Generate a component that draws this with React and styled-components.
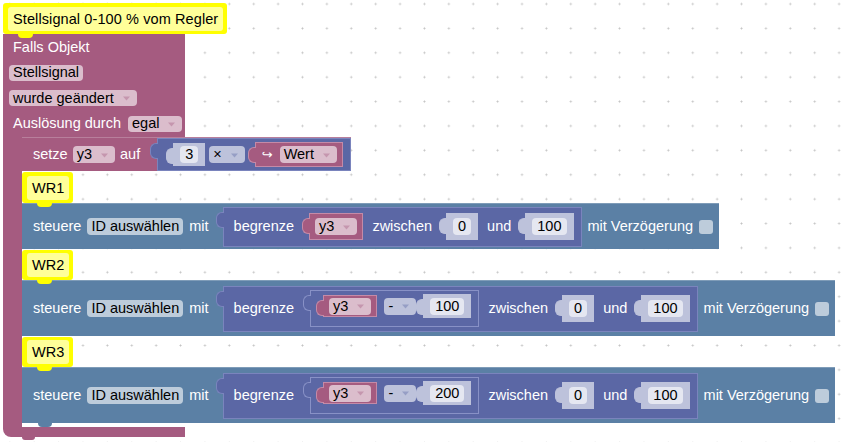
import React from "react";
import styled, { createGlobalStyle } from "styled-components";

const PURPLE = "#a55b80";
const STEEL = "#5b80a5";
const INDIGO = "#5b67a5";
const PINK_FIELD = "#dbbdcc";
const STEEL_FIELD = "#bdccdb";
const INDIGO_FIELD = "#bdc2db";
const SHADOW = "#bdc2db";
const SHADOW_FIELD = "#e5e7f1";
const PINK_ARROW = "#c596ae";
const INDIGO_ARROW = "#969ec5";

const GlobalStyle = createGlobalStyle`
  html, body { margin: 0; padding: 0; background: #fff; }
  body { font-family: "Liberation Sans", Arial, sans-serif; }
`;

const Canvas = styled.div`
  width: 841px;
  height: 442px;
  overflow: hidden;
  box-sizing: border-box;
  padding: 2px 0 0 3px;
  background-color: #fff;
  background-image: radial-gradient(circle, #c2c2c2 0.7px, transparent 1.3px);
  background-size: 24.4px 24.4px;
  background-position: -2.4px -8.2px;
  font-family: "Liberation Sans", Arial, sans-serif;
  font-size: 14.5px;
`;

const Program = styled.div`
  display: flex;
  flex-direction: column;
  align-items: flex-start;
`;

const Comment = styled.div`
  position: relative;
  display: flex;
  align-items: center;
  box-sizing: border-box;
  height: ${({ $h }) => $h}px;
  margin-top: 1px;
  padding: 0 4px 0 5px;
  background: #ffff00;
  border-radius: 3px;

  &::after {
    content: "";
    position: absolute;
    left: 15px;
    bottom: -4px;
    width: 15px;
    height: 4px;
    background: #ffff00;
    border-radius: 0 0 6px 6px;
    z-index: 3;
  }
`;

const CommentText = styled.span`
  display: block;
  height: 24px;
  line-height: 24px;
  padding: 0 5px;
  background: #ffff99;
  border-radius: 3px;
  color: #000;
  white-space: nowrap;
  letter-spacing: ${({ $ls }) => $ls || 0}px;
`;

const EventBlock = styled.div`
  display: flex;
  flex-direction: column;
  align-items: flex-start;
`;

const EventHead = styled.div`
  display: flex;
  flex-direction: column;
  box-sizing: border-box;
  width: 182px;
  padding: 0 0 1px 6px;
  background: ${PURPLE};
`;

const HeadRow = styled.div`
  display: flex;
  align-items: center;
  gap: 7px;
  height: ${({ $h }) => $h}px;
  padding-left: ${({ $inset }) => $inset || 0}px;
`;

const EventBody = styled.div`
  display: flex;
  align-items: stretch;
`;

const Spine = styled.div`
  flex: none;
  width: 19px;
  background: ${PURPLE};
`;

const Statements = styled.div`
  display: flex;
  flex-direction: column;
  align-items: flex-start;
  padding-bottom: 4px;
`;

const Foot = styled.div`
  position: relative;
  width: 182px;
  height: 10px;
  background: ${PURPLE};
  border-radius: 0 0 0 8px;

  &::after {
    content: "";
    position: absolute;
    left: 19px;
    bottom: -3px;
    width: 13px;
    height: 3px;
    background: ${PURPLE};
    border-radius: 0 0 5px 5px;
  }
`;

const Statement = styled.div`
  position: relative;
  display: flex;
  align-items: center;
  box-sizing: border-box;
  height: ${({ $h }) => $h}px;
  padding: ${({ $pad }) => $pad};
  gap: ${({ $gap }) => $gap}px;
  background: ${({ $color }) => $color};
  border-top: 1px solid rgba(255, 255, 255, 0.22);

  &::after {
    content: "";
    display: ${({ $tail }) => ($tail ? "block" : "none")};
    position: absolute;
    left: 16px;
    bottom: -4px;
    width: 14px;
    height: 4px;
    background: ${({ $color }) => $color};
    border-radius: 0 0 5px 5px;
  }
`;

const ValueBlock = styled.div`
  position: relative;
  flex: none;
  display: flex;
  align-items: center;
  box-sizing: border-box;
  height: ${({ $h }) => ($h ? `${$h}px` : "auto")};
  align-self: ${({ $h }) => ($h ? "auto" : "stretch")};
  margin-left: ${({ $ml }) => $ml || 0}px;
  padding: ${({ $pad }) => $pad};
  gap: ${({ $gap }) => $gap || 0}px;
  background: ${({ $color }) => $color};
  border: 1px solid ${({ $edge }) => $edge};

  &::before {
    content: "";
    position: absolute;
    left: -8px;
    top: 4px;
    width: 7px;
    height: 14px;
    background: ${({ $color }) => $color};
    border: 1px solid ${({ $edge }) => $edge};
    border-right: none;
    border-radius: 6px 0 0 6px;
  }
`;

const Text = styled.span`
  color: #fff;
  white-space: nowrap;
  line-height: 17px;
`;

const Hook = styled.span`
  color: #fff;
  font-family: "DejaVu Sans", sans-serif;
  font-size: 13px;
  line-height: 17px;
`;

const Field = styled.span`
  display: inline-flex;
  align-items: center;
  flex: none;
  height: ${({ $fh }) => $fh || 17}px;
  padding: 0 ${({ $px }) => $px || 4}px;
  background: ${({ $bg }) => $bg};
  border-radius: 4px;
  color: #000;
  white-space: nowrap;
  line-height: 17px;
`;

const ArrowSvg = styled.svg`
  margin: 1px 3px 0 9px;
  flex: none;
`;

const Checkbox = styled.span`
  flex: none;
  width: 14px;
  height: 14px;
  border-radius: 3px;
  background: ${STEEL_FIELD};
`;

function Arrow({ color }) {
  return (
    <ArrowSvg width="7" height="5" viewBox="0 0 7 5">
      <path d="M0 0.5h7L3.5 4.5z" fill={color} />
    </ArrowSvg>
  );
}

function Dropdown({ children, bg, arrow, fh }) {
  return (
    <Field $bg={bg} $fh={fh}>
      {children}
      <Arrow color={arrow} />
    </Field>
  );
}

function VarBlock({ name, h, ml }) {
  return (
    <ValueBlock $color={PURPLE} $edge="#c48aa7" $h={h} $ml={ml} $pad="0 5px">
      <Dropdown bg={PINK_FIELD} arrow={PINK_ARROW}>
        {name}
      </Dropdown>
    </ValueBlock>
  );
}

function NumBlock({ value, h, ml }) {
  return (
    <ValueBlock $color={SHADOW} $edge={SHADOW} $h={h} $ml={ml} $pad="0 6px">
      <Field $bg={SHADOW_FIELD} $px={5}>
        {value}
      </Field>
    </ValueBlock>
  );
}

function Minus({ value }) {
  return (
    <ValueBlock
      $color={INDIGO}
      $edge="#8891c6"
      $h={37}
      $ml={7}
      $pad="4px 7px 9px 5px"
      $gap={7}
    >
      <VarBlock name="y3" h={22} ml={7} />
      <Dropdown bg={INDIGO_FIELD} arrow={INDIGO_ARROW}>
        -
      </Dropdown>
      <NumBlock value={value} h={24} />
    </ValueBlock>
  );
}

function Clamp({ h, children }) {
  return (
    <ValueBlock
      $color={INDIGO}
      $edge="#7a84bd"
      $h={h}
      $ml={8}
      $pad="0 7px 0 10px"
      $gap={9}
    >
      <Text>begrenze</Text>
      {children}
      <Text>zwischen</Text>
      <NumBlock value="0" h={27} ml={5} />
      <Text>und</Text>
      <NumBlock value="100" h={27} ml={5} />
    </ValueBlock>
  );
}

function Steuere({ h, tail, children }) {
  return (
    <Statement $color={STEEL} $h={h} $pad="0 6px 0 11px" $gap={6} $tail={tail}>
      <Text>steuere</Text>
      <Field $bg={STEEL_FIELD}>ID auswählen</Field>
      <Text>mit</Text>
      {children}
      <Text>mit Verzögerung</Text>
      <Checkbox />
    </Statement>
  );
}

function Note({ h, text, ls }) {
  return (
    <Comment $h={h}>
      <CommentText $ls={ls}>{text}</CommentText>
    </Comment>
  );
}

export default function App() {
  return (
    <>
      <GlobalStyle />
      <Canvas>
        <Program>
          <Note h={31} text="Stellsignal 0-100 % vom Regler" ls={0.1} />
          <EventBlock>
            <EventHead>
              <HeadRow $h={26} $inset={4}>
                <Text>Falls Objekt</Text>
              </HeadRow>
              <HeadRow $h={25}>
                <Field $bg={PINK_FIELD} $fh={16}>
                  Stellsignal
                </Field>
              </HeadRow>
              <HeadRow $h={26}>
                <Dropdown bg={PINK_FIELD} arrow={PINK_ARROW} fh={16}>
                  wurde geändert
                </Dropdown>
              </HeadRow>
              <HeadRow $h={25} $inset={4}>
                <Text>Auslösung durch</Text>
                <Dropdown bg={PINK_FIELD} arrow={PINK_ARROW} fh={16}>
                  egal
                </Dropdown>
              </HeadRow>
            </EventHead>
            <EventBody>
              <Spine />
              <Statements>
                <Statement $color={PURPLE} $h={34} $pad="0 0 0 11px" $gap={5}>
                  <Text>setze</Text>
                  <Dropdown bg={PINK_FIELD} arrow={PINK_ARROW}>
                    y3
                  </Dropdown>
                  <Text>auf</Text>
                  <ValueBlock
                    $color={INDIGO}
                    $edge="#7a84bd"
                    $ml={12}
                    $pad="0 7px 0 8px"
                    $gap={4}
                  >
                    <NumBlock value="3" h={23} ml={7} />
                    <Dropdown bg={INDIGO_FIELD} arrow={INDIGO_ARROW}>
                      ×
                    </Dropdown>
                    <ValueBlock
                      $color={PURPLE}
                      $edge="#c48aa7"
                      $h={25}
                      $ml={6}
                      $pad="0 5px 0 6px"
                      $gap={7}
                    >
                      <Hook>↪</Hook>
                      <Dropdown bg={PINK_FIELD} arrow={PINK_ARROW}>
                        Wert
                      </Dropdown>
                    </ValueBlock>
                  </ValueBlock>
                </Statement>
                <Note h={31} text="WR1" />
                <Steuere h={46}>
                  <Clamp h={40}>
                    <VarBlock name="y3" h={27} ml={6} />
                  </Clamp>
                </Steuere>
                <Note h={30} text="WR2" />
                <Steuere h={56}>
                  <Clamp h={46}>
                    <Minus value="100" />
                  </Clamp>
                </Steuere>
                <Note h={30} text="WR3" />
                <Steuere h={56} tail>
                  <Clamp h={46}>
                    <Minus value="200" />
                  </Clamp>
                </Steuere>
              </Statements>
            </EventBody>
            <Foot />
          </EventBlock>
        </Program>
      </Canvas>
    </>
  );
}
